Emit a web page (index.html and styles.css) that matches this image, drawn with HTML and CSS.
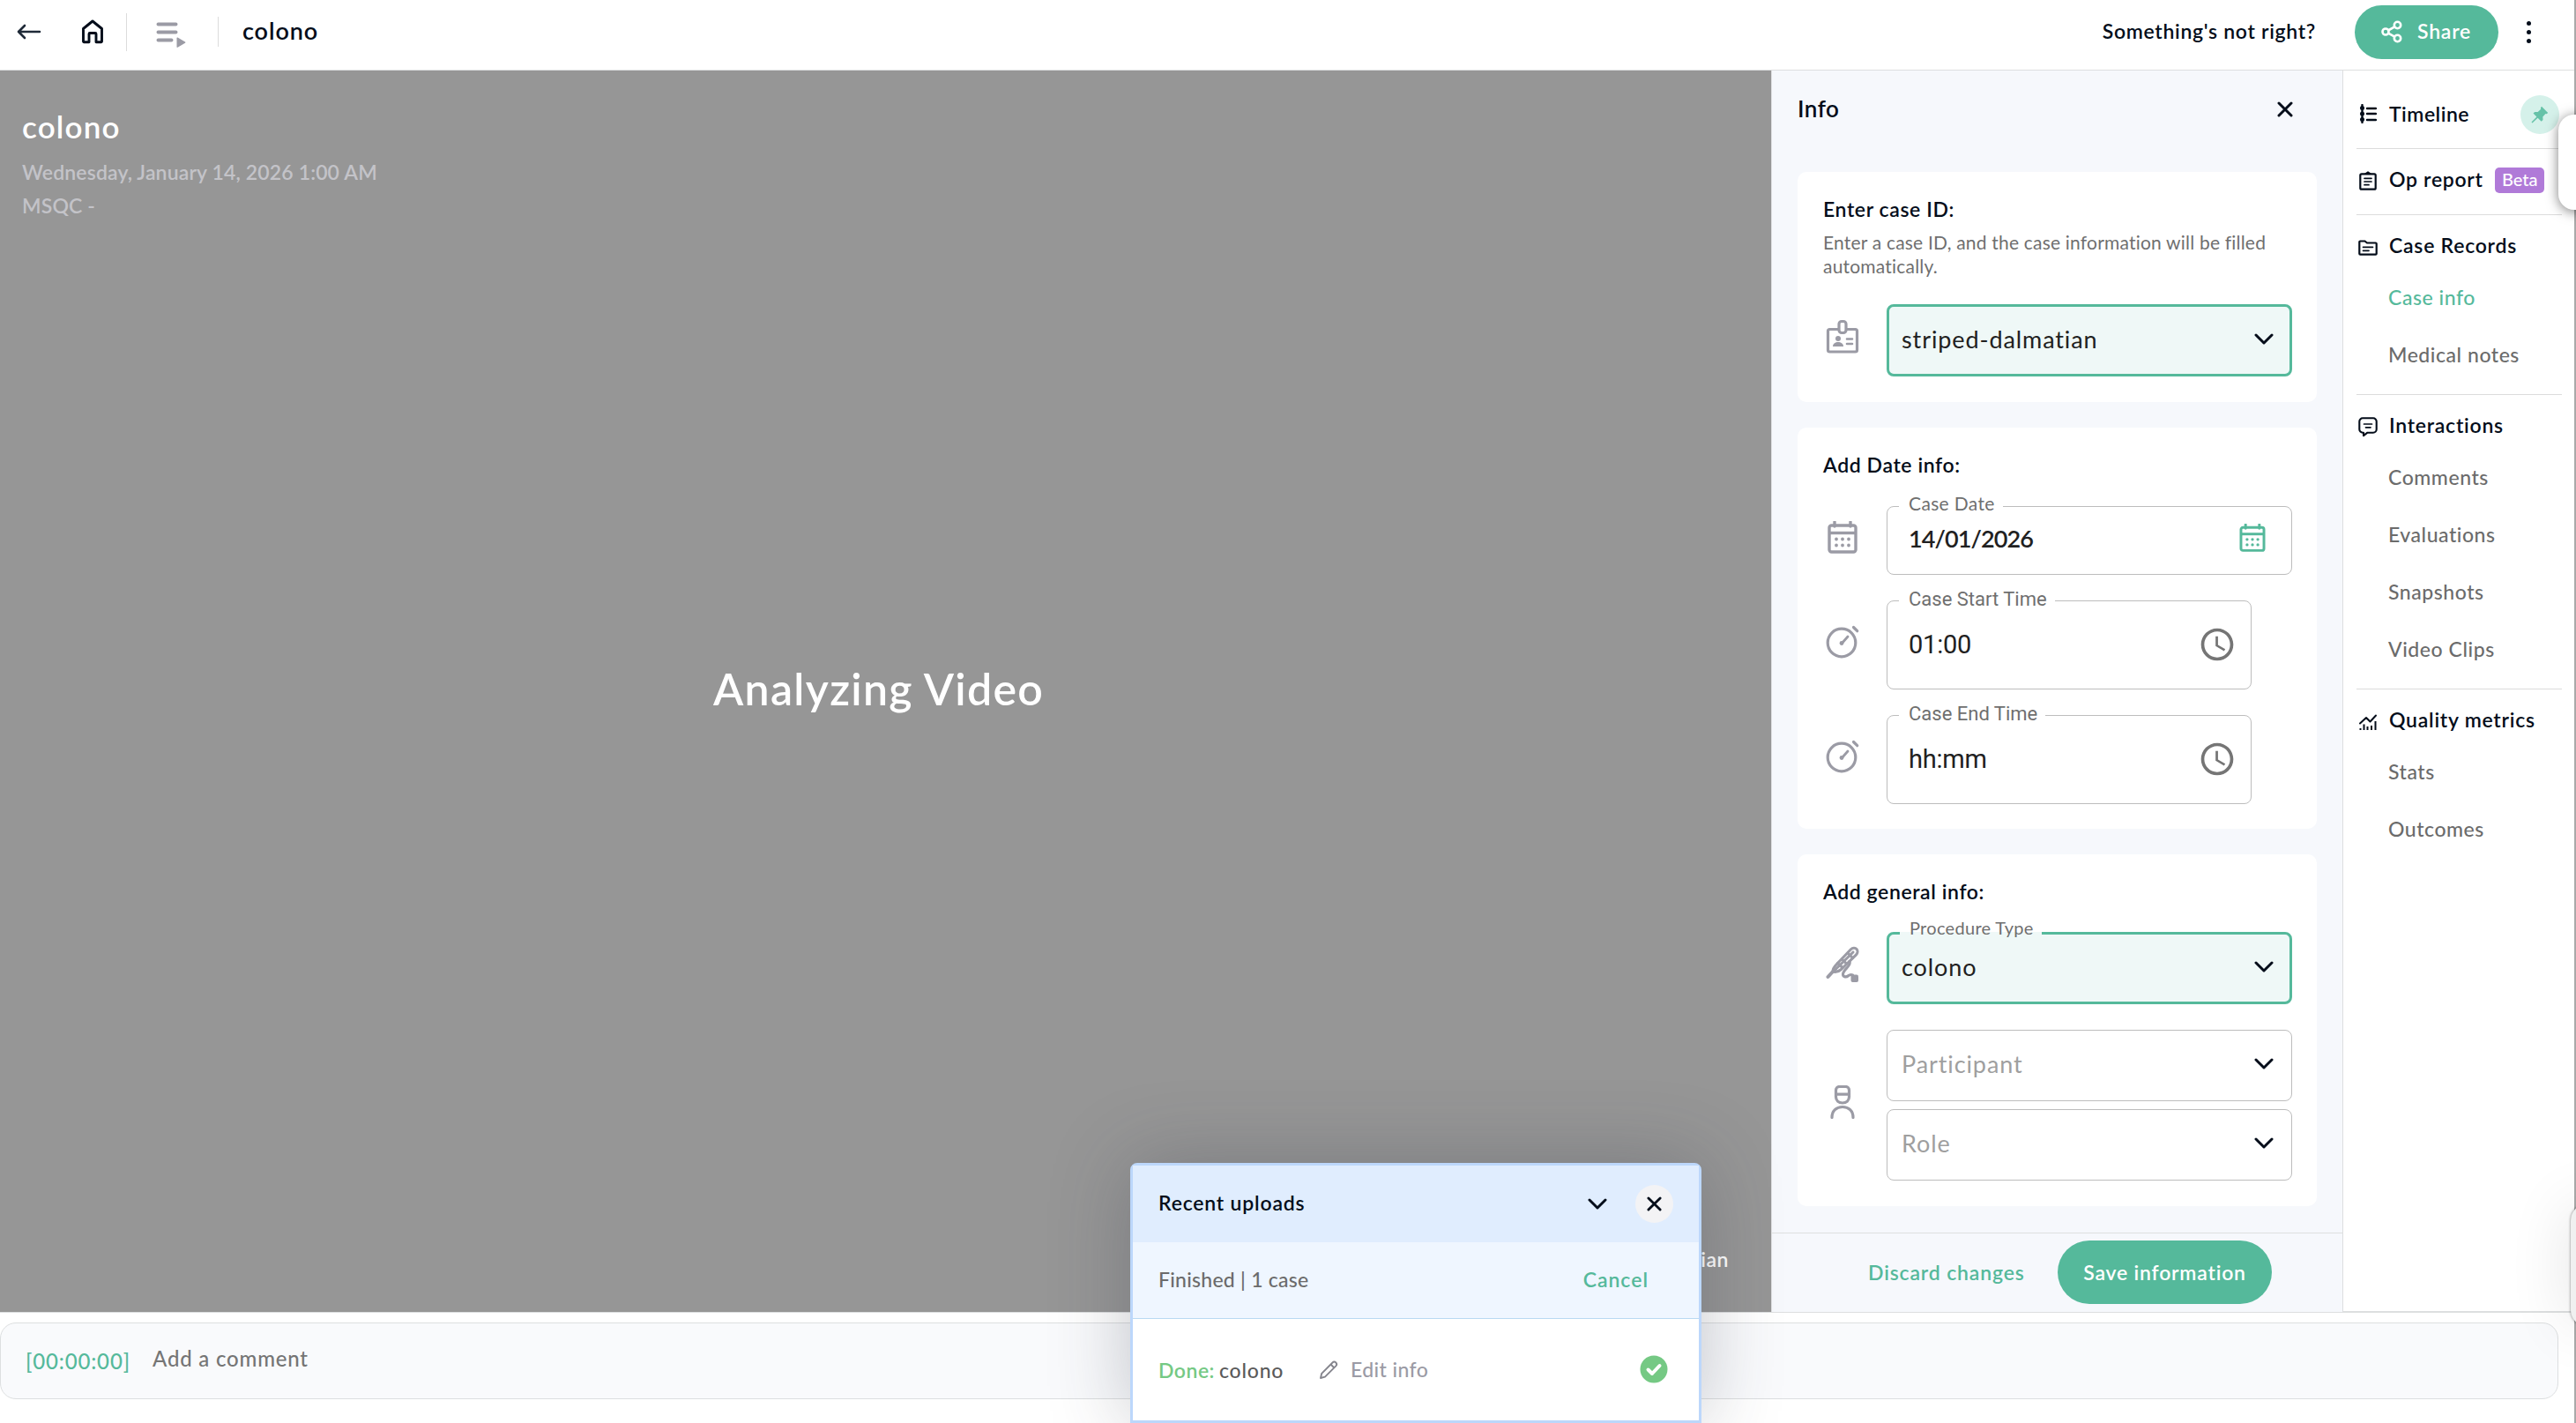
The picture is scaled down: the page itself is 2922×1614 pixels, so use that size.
FILE: index.html
```html
<!DOCTYPE html>
<html lang="en">

<head>
    <meta charset="utf-8">
    <title>colono</title>
    <link rel="stylesheet" href="styles.css">
</head>

<body>
    <!-- shared icons -->
    <svg width="0" height="0" class="sprite">
        <symbol id="chevron" viewBox="0 0 22 13">
            <path d="M2 2l9 9 9-9" fill="none" stroke="currentColor" stroke-width="3" stroke-linecap="round" stroke-linejoin="round" />
        </symbol>
        <symbol id="cross" viewBox="0 0 18 18">
            <path d="M2 2l14 14M16 2L2 16" fill="none" stroke="currentColor" stroke-width="3" stroke-linecap="round" />
        </symbol>
        <symbol id="calendar" viewBox="0 0 34 38">
            <path d="M8 1v5M26 1v5" stroke="currentColor" stroke-width="3.4" stroke-linecap="round" />
            <rect x="2" y="5" width="30" height="30" rx="2.5" fill="none" stroke="currentColor" stroke-width="3.4" />
            <path d="M2 13.5h30" stroke="currentColor" stroke-width="3.4" />
            <path d="M10 20.5h.01M17 20.5h.01M24 20.5h.01M10 27.5h.01M17 27.5h.01M24 27.5h.01" stroke="currentColor" stroke-width="3.8" stroke-linecap="round" />
        </symbol>
        <symbol id="stopwatch" viewBox="0 0 38 38">
            <circle cx="18" cy="20" r="15.8" fill="none" stroke="currentColor" stroke-width="3.2" />
            <path d="M18 21l7-8" stroke="currentColor" stroke-width="2.8" stroke-linecap="round" />
            <circle cx="18" cy="20.5" r="2.4" fill="currentColor" />
            <path d="M31.5 2.5l4.2 4.2" stroke="currentColor" stroke-width="3.2" stroke-linecap="round" />
        </symbol>
        <symbol id="clock" viewBox="0 0 24 24">
            <path fill="currentColor" d="M11.99 2C6.47 2 2 6.48 2 12s4.47 10 9.99 10C17.52 22 22 17.52 22 12S17.52 2 11.99 2zM12 20c-4.42 0-8-3.58-8-8s3.58-8 8-8 8 3.58 8 8-3.58 8-8 8z" />
            <path fill="currentColor" d="M12.5 7H11v6l5.25 3.15.75-1.23-4.5-2.67z" />
        </symbol>
    </svg>

    <header class="topbar">
        <svg class="back" viewBox="0 0 28 18" width="28" height="18">
            <path d="M9 2L2 9l7 7M2 9h24" fill="none" stroke="#1f2a38" stroke-width="2.6" stroke-linecap="round" stroke-linejoin="round" />
        </svg>
        <svg class="home" viewBox="0 0 26 28" width="26" height="28">
            <path d="M2.5 10.5L13 2l10.5 8.5V25a.8.8 0 0 1-.8.8H17V16.5a1 1 0 0 0-1-1h-6a1 1 0 0 0-1 1V25.8H3.3a.8.8 0 0 1-.8-.8z" fill="none" stroke="#040d1a" stroke-width="2.9" stroke-linejoin="round" />
        </svg>
        <span class="sep"></span>
        <svg class="playlist" viewBox="0 0 34 30" width="34" height="30">
            <path d="M2.5 3.5h20M2.5 12.5h20M2.5 21.5h15" stroke="#9b9ba5" stroke-width="4" stroke-linecap="round" />
            <path d="M24.5 18.5l8.5 5a.7.7 0 0 1 0 1.2l-8.5 5c-.6.3-1 0-1-.5V19c0-.5.4-.8 1-.5z" fill="#9b9ba5" />
        </svg>
        <span class="sep short"></span>
        <span class="case-name">colono</span>
        <span class="feedback">Something's not right?</span>
        <button class="share">
            <svg viewBox="0 0 24 26" width="24" height="26">
                <g fill="none" stroke="#fff" stroke-width="2.6">
                    <circle cx="5" cy="13" r="3.5" />
                    <circle cx="18.5" cy="5.5" r="3.7" />
                    <circle cx="18.5" cy="20.5" r="3.7" />
                    <path d="M8 11.5l7.3-4.2M8 14.7l7.3 4" />
                </g>
            </svg>
            Share
        </button>
        <span class="more"><i></i><i></i><i></i></span>
    </header>

    <main class="content">
        <section class="video">
            <h2>colono</h2>
            <p>Wednesday, January 14, 2026 1:00 AM</p>
            <p>MSQC -</p>
            <div class="analyzing">Analyzing Video</div>
            <div class="watermark">striped-dalmatian</div>
        </section>

        <aside class="info">
            <div class="info-head">
                <span>Info</span>
                <svg width="18" height="18"><use href="#cross" /></svg>
            </div>

            <div class="card card-id">
                <h3>Enter case ID:</h3>
                <p class="help">Enter a case ID, and the case information will be filled automatically.</p>
                <div class="row">
                    <svg class="row-icon" viewBox="0 0 38 40" width="38" height="40">
                        <g fill="none" stroke="currentColor" stroke-width="3.2">
                            <rect x="2.5" y="11.5" width="33" height="25.5" rx="2" />
                            <rect x="15" y="2.5" width="8" height="13" rx="3" fill="#fff" />
                            <path d="M24 22.5h6M24 28h6" stroke-linecap="round" stroke-width="2.6" />
                        </g>
                        <circle cx="14" cy="22" r="3" fill="currentColor" />
                        <path d="M8 31c0-3.5 3-5 6-5s6 1.5 6 5z" fill="currentColor" />
                    </svg>
                    <div class="field select filled">striped-dalmatian
                        <svg class="chev"><use href="#chevron" /></svg>
                    </div>
                </div>
            </div>

            <div class="card card-date">
                <h3>Add Date info:</h3>
                <div class="row row-date">
                    <svg class="row-icon" width="34" height="38"><use href="#calendar" /></svg>
                    <div class="field date">
                        <label>Case Date</label>
                        14/01/2026
                        <svg class="cal" width="30" height="33"><use href="#calendar" /></svg>
                    </div>
                </div>
                <div class="row">
                    <svg class="row-icon" width="38" height="38"><use href="#stopwatch" /></svg>
                    <div class="field time">
                        <label>Case Start Time</label>
                        01:00
                        <svg class="clock" width="44" height="44"><use href="#clock" /></svg>
                    </div>
                </div>
                <div class="row">
                    <svg class="row-icon" width="38" height="38"><use href="#stopwatch" /></svg>
                    <div class="field time">
                        <label>Case End Time</label>
                        hh:mm
                        <svg class="clock" width="44" height="44"><use href="#clock" /></svg>
                    </div>
                </div>
            </div>

            <div class="card card-general">
                <h3>Add general info:</h3>
                <div class="row">
                    <svg class="row-icon" viewBox="0 0 38 42" width="38" height="42">
                        <g fill="none" stroke="currentColor" stroke-width="3.1" stroke-linecap="round" stroke-linejoin="round">
                            <path d="M2.5 35L8 29" stroke-width="4" />
                            <path d="M8 29c0-3 1.500-5.500 4-8L28.500 3.800c2-2 5-2 6.500-.3s1.300 4.500-.5 6.300L17.500 26.500c-2.500 2.300-5.500 3.500-9.500 2.500z" />
                            <path d="M9 28.500L31 7M13.500 19.500l5.500 5M25 8l5.500 5.500M18.500 15l5 5" />
                            <path d="M27 17.500c2.500 5-7.500 9-7.500 14.500 0 3.500 4 3.500 6 1.800 1.800-1.500 3-1.800 5-.8" />
                        </g>
                        <rect x="28.500" y="32.500" width="8.500" height="8.500" rx="2" fill="currentColor" />
                    </svg>
                    <div class="field select filled">
                        <label>Procedure Type</label>
                        colono
                        <svg class="chev"><use href="#chevron" /></svg>
                    </div>
                </div>
                <div class="row">
                    <svg class="row-icon person" viewBox="0 0 28 38" width="28" height="38">
                        <g fill="none" stroke="currentColor" stroke-width="3.2">
                            <path d="M6.500 5.500a4 4 0 0 1 4-4h7a4 4 0 0 1 4 4V13c0 4-3 7-7.500 7s-7.500-3-7.500-7zM6.500 10.200h15" />
                            <path d="M2 36.500c0-7.500 5-12 12-12s12 4.500 12 12" stroke-linecap="round" />
                        </g>
                    </svg>
                    <div class="stack">
                        <div class="field select">Participant
                            <svg class="chev"><use href="#chevron" /></svg>
                        </div>
                        <div class="field select">Role
                            <svg class="chev"><use href="#chevron" /></svg>
                        </div>
                    </div>
                </div>
            </div>

            <div class="info-foot">
                <span class="discard">Discard changes</span>
                <button class="save">Save information</button>
            </div>
        </aside>

        <nav class="side">
            <div class="group timeline">
                <svg viewBox="0 0 20 22" width="20" height="22">
                    <path d="M3.5 1v20M9 5h10M9 11h10M9 18h10" stroke="#040d1a" stroke-width="2.4" stroke-linecap="round" />
                    <path d="M3.5 4.5h.01M3.5 11h.01M3.5 17.5h.01" stroke="#040d1a" stroke-width="5" stroke-linecap="round" />
                </svg>
                <b>Timeline</b>
                <span class="pin">
                    <svg viewBox="0 0 20 20" width="20" height="20">
                        <path d="M12 .8L19.2 8l-1.500 1.200-1.200-.2-3.200 3.500.2 3.500-1.800 1.800L7.600 13.700 1.500 19.500l-1-1 5.900-6L2.500 8.600l1.700-1.700 3.500.2L11.200 3.800l-.3-1.600z" fill="#66c2a8" />
                    </svg>
                </span>
            </div>
            <div class="group report">
                <svg viewBox="0 0 20 22" width="20" height="22">
                    <rect x="1.3" y="3.3" width="17.4" height="17.4" rx="1.5" fill="none" stroke="#040d1a" stroke-width="2.2" />
                    <path d="M7 3l3-2 3 2z" fill="#040d1a" stroke="#040d1a" stroke-width="1.5" stroke-linejoin="round" />
                    <path d="M6 8.3h8M6 12h8M6 15.7h5" stroke="#040d1a" stroke-width="1.7" stroke-linecap="round" />
                </svg>
                <b>Op report</b>
                <span class="beta">Beta</span>
            </div>
            <div class="group list">
                <div class="head">
                    <svg viewBox="0 0 22 18" width="22" height="18">
                        <path d="M1.3 2.5a1 1 0 0 1 1-1h5.200l2.500 2h9.700a1 1 0 0 1 1 1v11.200a1 1 0 0 1-1 1H2.300a1 1 0 0 1-1-1z" fill="none" stroke="#040d1a" stroke-width="2.2" />
                        <path d="M5.5 8.3h11M5.5 12.3H12" stroke="#040d1a" stroke-width="1.7" stroke-linecap="round" />
                    </svg>
                    <b>Case Records</b>
                </div>
                <a class="active">Case info</a>
                <a>Medical notes</a>
            </div>
            <div class="group list">
                <div class="head">
                    <svg viewBox="0 0 22 23" width="22" height="23">
                        <path d="M5 1.3h12A3.7 3.7 0 0 1 20.7 5v9a3.700 3.700 0 0 1-3.700 3.700h-6.500L6 21.200v-3.500H5A3.700 3.700 0 0 1 1.300 14V5A3.700 3.700 0 0 1 5 1.300z" fill="none" stroke="#040d1a" stroke-width="2.1" stroke-linejoin="round" />
                        <path d="M6.5 8h9M8.5 11.8H14" stroke="#040d1a" stroke-width="1.7" stroke-linecap="round" />
                    </svg>
                    <b>Interactions</b>
                </div>
                <a>Comments</a>
                <a>Evaluations</a>
                <a>Snapshots</a>
                <a>Video Clips</a>
            </div>
            <div class="group list">
                <div class="head">
                    <svg viewBox="0 0 22 20" width="22" height="20">
                        <path d="M2 11.5L9 5l4.500 4.500L20 2.500" fill="none" stroke="#040d1a" stroke-width="2" stroke-linecap="round" stroke-linejoin="round" />
                        <path d="M2.500 17v2M6.500 12.500V19M10.500 15v4M15 14v5M19.500 9v10" stroke="#040d1a" stroke-width="2" />
                    </svg>
                    <b>Quality metrics</b>
                </div>
                <a>Stats</a>
                <a>Outcomes</a>
            </div>
        </nav>
    </main>

    <footer class="comment-bar">
        <div class="comment-box">
            <span class="stamp">[00:00:00]</span>
            <span class="placeholder">Add a comment</span>
        </div>
    </footer>

    <div class="uploads">
        <div class="up-head">
            <b>Recent uploads</b>
            <svg class="chev"><use href="#chevron" /></svg>
            <span class="close"><svg width="17" height="17"><use href="#cross" /></svg></span>
        </div>
        <div class="up-status">
            <span>Finished | 1 case</span>
            <span class="cancel">Cancel</span>
        </div>
        <div class="up-item">
            <span class="done">Done:</span>
            <span class="up-name">colono</span>
            <svg class="pencil" viewBox="0 0 22 22" width="22" height="22">
                <path d="M2 20l1.200-5.200L15.500 2.500a2.600 2.600 0 0 1 3.800 3.800L7 18.700zM13.500 4.500l4 4" fill="none" stroke="#85858d" stroke-width="1.9" stroke-linejoin="round" />
            </svg>
            <span class="edit">Edit info</span>
            <svg class="check" viewBox="0 0 32 32" width="32" height="32">
                <circle cx="16" cy="16" r="15.5" fill="#75c984" />
                <path d="M9.500 16.500L14 21l8.500-9" fill="none" stroke="#fff" stroke-width="4" stroke-linecap="round" stroke-linejoin="round" />
            </svg>
        </div>
    </div>

    <div class="edge"></div>
    <div class="tab tab-top"></div>
    <div class="tab tab-bottom"></div>
</body>

</html>
```
FILE: styles.css
```css
* {
    box-sizing: border-box;
}

body {
    margin: 0;
    width: 2922px;
    height: 1614px;
    overflow: hidden;
    position: relative;
    background: #fff;
    color: #040d1a;
    font-family: Lato, "Liberation Sans", sans-serif;
    font-size: 23px;
    letter-spacing: 0.5px;
    white-space: nowrap;
}

h2, h3, p {
    margin: 0;
}

b {
    font-weight: 600;
}

svg {
    display: block;
    flex: none;
}

button {
    border: none;
    background: #55b99b;
    color: #fff;
    font-family: inherit;
    font-size: 23px;
    font-weight: 600;
    letter-spacing: 0.8px;
    padding: 0;
}

.sprite {
    position: absolute;
}

.chev {
    width: 22px;
    height: 13px;
    color: #040d1a;
}

/* top bar */
.topbar {
    display: flex;
    align-items: center;
    height: 80px;
    padding: 0 51px 7px 19px;
    border-bottom: 1px solid #dddfe0;
}

.home {
    margin-left: 45px;
}

.sep {
    width: 1px;
    height: 43px;
    margin-left: 25px;
    background: #dcdcdc;
}

.playlist {
    margin: 6px 0 0 33px;
}

.sep.short {
    height: 34px;
    margin-left: 36px;
}

.case-name {
    margin: -3px 0 0 27px;
    font-size: 27px;
    font-weight: 600;
    letter-spacing: 0.9px;
}

.feedback {
    margin: -2px 44px 0 auto;
    font-weight: 600;
    letter-spacing: 0.7px;
}

.share {
    display: flex;
    align-items: center;
    width: 163px;
    height: 61px;
    padding: 0 0 3px 30px;
    border-radius: 31px;
}

.share svg {
    margin: 3px 17px 0 0;
}

.more {
    display: flex;
    flex-direction: column;
    gap: 5px;
    margin-left: 32px;
}

.more i {
    width: 5px;
    height: 5px;
    border-radius: 50%;
    background: #040d1a;
}

/* main area */
.content {
    display: flex;
    height: 1408px;
}

.video {
    position: relative;
    width: 2009px;
    padding: 45px 0 0 25px;
    background: #969696;
    color: #fff;
}

.video h2 {
    height: 42px;
    line-height: 36px;
    font-size: 35px;
    font-weight: 600;
    letter-spacing: 1.2px;
}

.video p {
    height: 38px;
    line-height: 57px;
    color: #c3c3c8;
    font-weight: 600;
    letter-spacing: 0.15px;
}

.analyzing {
    position: absolute;
    left: 809px;
    top: 671px;
    font-size: 50px;
    font-weight: 600;
    letter-spacing: 1.3px;
}

.watermark {
    position: absolute;
    right: 48px;
    bottom: 46px;
    font-weight: 600;
}

/* info panel */
.info {
    width: 648px;
    padding: 0 29px;
    background: #f6f8fc;
    border-left: 1px solid #dedfe1;
}

.info-head {
    display: flex;
    justify-content: space-between;
    height: 115px;
    padding: 27px 27px 0 0;
    font-size: 26px;
    font-weight: 600;
}

.info-head svg {
    margin-top: 8px;
}

.card {
    height: 261px;
    padding: 27px 28px 0 29px;
    border-radius: 10px;
    background: #fff;
}

.card-date {
    height: 455px;
    margin-top: 29px;
}

.card-general {
    height: 399px;
    margin-top: 29px;
}

.card h3 {
    line-height: 30px;
    font-size: 23px;
    font-weight: 600;
    letter-spacing: 0.6px;
}

.help {
    margin-top: 9px;
    line-height: 27px;
    font-size: 21px;
    letter-spacing: 0.2px;
    color: #6f6f6f;
    white-space: normal;
}

.row {
    display: flex;
    align-items: center;
    margin-top: 29px;
}

.card-id .row {
    margin-top: 30px;
}

.card-date .row-date {
    margin-top: 32px;
}

.card-general h3 + .row {
    margin-top: 31px;
}

.row-icon {
    margin: 0 31px 8px 3px;
    color: #9b9ba5;
}

.row-date .row-icon {
    margin: 0 33px 6px 5px;
}

.row-icon.person {
    margin: 0 36px 8px 8px;
}

.field {
    position: relative;
    display: flex;
    align-items: center;
    width: 460px;
    height: 81px;
    border: 1px solid #bdbdbd;
    border-radius: 8px;
    color: #212121;
}

.field svg {
    margin-left: auto;
}

.field label {
    position: absolute;
    left: 13px;
    top: -16px;
    padding: 0 9px 0 11px;
    line-height: 24px;
    font-size: 21px;
    letter-spacing: 0.35px;
    color: #6f6f6f;
    background: #fff;
}

.select {
    padding: 0 20px 4px 16px;
    font-size: 27px;
    letter-spacing: 0.9px;
    color: #9f9f9f;
}

.filled {
    height: 82px;
    padding: 0 18px 4px 14px;
    border: 3px solid #55b99b;
    background: #eff8f7;
    color: #212121;
}

.filled label {
    left: 12px;
    top: -20px;
    font-size: 20px;
    letter-spacing: 0.3px;
    background: linear-gradient(#fff 17px, #eff8f7 17px);
}

.date {
    height: 78px;
    padding: 0 29px 5px 24px;
    font-size: 27px;
    font-weight: 600;
    letter-spacing: -0.9px;
}

.date label {
    font-weight: 400;
}

.cal {
    color: #55b99b;
}

.time {
    width: 414px;
    height: 101px;
    padding: 0 16px 1px 24px;
    font-family: Roboto, sans-serif;
    font-size: 29px;
    letter-spacing: -0.2px;
}

.time label {
    top: -14px;
    font-size: 22px;
    letter-spacing: 0;
}

.clock {
    color: #757575;
}

.stack .field + .field {
    margin-top: 9px;
}

.info-foot {
    display: flex;
    align-items: center;
    height: 91px;
    margin: 30px -29px 0;
    padding-left: 109px;
    border-top: 1px solid #dddfe0;
    border-bottom: 1px solid #dddfe0;
}

.discard {
    width: 215px;
    margin-top: -2px;
    color: #55b99b;
    font-weight: 600;
    letter-spacing: 0.85px;
}

.save {
    width: 243px;
    height: 72px;
    margin-top: -1px;
    padding-bottom: 1px;
    border-radius: 36px;
}

/* right navigation */
.side {
    width: 265px;
    padding: 0 16px 0 15px;
    border-left: 1px solid #dddfe0;
    border-bottom: 1px solid #dddfe0;
}

.group {
    width: 233px;
    border-bottom: 1px solid #dcdcdc;
}

.group:last-child {
    border: none;
}

.timeline,
.report,
.head {
    display: flex;
    align-items: center;
    padding-left: 3px;
}

.timeline {
    height: 89px;
    padding-top: 10px;
}

.report {
    height: 75px;
}

.report svg {
    margin-top: -3px;
}

.report b {
    margin-top: -7px;
}

.timeline b,
.report b {
    margin-left: 14px;
    letter-spacing: 0.5px;
}

.report b {
    letter-spacing: 0.7px;
}

.pin {
    display: flex;
    align-items: center;
    justify-content: center;
    width: 44px;
    height: 44px;
    margin: 2px 3px 0 auto;
    border-radius: 50%;
    background: #d5f1ea;
}

.beta {
    width: 56px;
    height: 29px;
    margin: -3px 20px 0 auto;
    padding-left: 8px;
    border-radius: 5px;
    background: #b07ad8;
    color: #fff;
    line-height: 27px;
    font-size: 20px;
    font-weight: 500;
    letter-spacing: 0;
}

.list {
    padding-bottom: 12px;
}

.head {
    height: 61px;
    padding: 8px 0 0 2px;
}

.head b {
    margin: -1px 0 0 13px;
    letter-spacing: 0.75px;
}

.head svg {
    margin-top: 4px;
}

.list a {
    display: block;
    height: 65px;
    padding-left: 36px;
    line-height: 65px;
    color: #6b6b6b;
    font-weight: 500;
    letter-spacing: 0.55px;
}

.list .active {
    color: #55b99b;
}

/* comment bar */
.comment-bar {
    height: 126px;
    padding-top: 11px;
    border-top: 1px solid #dddfe0;
}

.comment-box {
    display: flex;
    width: 2902px;
    height: 87px;
    padding: 24px 0 0 28px;
    border: 1px solid #dddfe0;
    border-radius: 18px;
    background: #f9fafc;
    font-size: 24px;
    font-weight: 500;
}

.stamp {
    width: 144px;
    padding-top: 4px;
    letter-spacing: 0.85px;
    color: #55b99b;
}

.placeholder {
    padding-top: 1px;
    color: #757575;
    letter-spacing: 0.8px;
}

/* upload popup */
.uploads {
    position: absolute;
    left: 1282px;
    top: 1319px;
    width: 648px;
    height: 295px;
    border: 3px solid #bcd7fb;
    border-radius: 8px 8px 0 0;
    background: #fff;
    box-shadow: 0 0 90px rgba(50, 55, 70, 0.28);
}

.up-head,
.up-status,
.up-item {
    display: flex;
    align-items: center;
    padding-left: 29px;
}

.up-head {
    height: 87px;
    background: #e0edfe;
}

.up-head b {
    width: 487px;
    margin-top: -4px;
    letter-spacing: 0.8px;
}

.close {
    display: flex;
    align-items: center;
    justify-content: center;
    width: 43px;
    height: 43px;
    margin-left: 32px;
    border-radius: 50%;
    background: #f3f3f5;
}

.up-status {
    justify-content: space-between;
    height: 87px;
    padding: 0 57px 3px 29px;
    border-bottom: 1px solid #b9d9f3;
    background: #eff6ff;
    color: #6b6b6b;
    font-weight: 500;
    letter-spacing: 0.25px;
}

.cancel {
    color: #55b99b;
    font-weight: 600;
    letter-spacing: 1px;
}

.up-item {
    height: 115px;
    color: #5a5a5a;
    font-weight: 500;
}

.done {
    width: 69px;
    color: #75c984;
    font-weight: 600;
}

.up-name {
    width: 113px;
    letter-spacing: 0.8px;
}

.edit {
    margin: -2px 0 0 14px;
    color: #9b9ba5;
    letter-spacing: 0.4px;
}

.check {
    margin: -2px 35px 0 auto;
}

/* window edge and the side tabs over it */
.edge {
    position: absolute;
    right: 0;
    top: 0;
    width: 2px;
    height: 1614px;
    background: #a9a9a9;
}

.tab {
    position: absolute;
    right: -40px;
}

.tab-top {
    top: 130px;
    width: 60px;
    height: 108px;
    border-radius: 18px;
    background: #fff;
    box-shadow: 0 2px 14px rgba(0, 0, 0, 0.5);
}

.tab-bottom {
    top: 1366px;
    width: 46px;
    height: 138px;
    border-radius: 18px;
    background: #f0f0f0;
    box-shadow: 0 0 3px rgba(0, 0, 0, 0.5), 0 0 70px rgba(0, 0, 0, 0.12);
}
```
